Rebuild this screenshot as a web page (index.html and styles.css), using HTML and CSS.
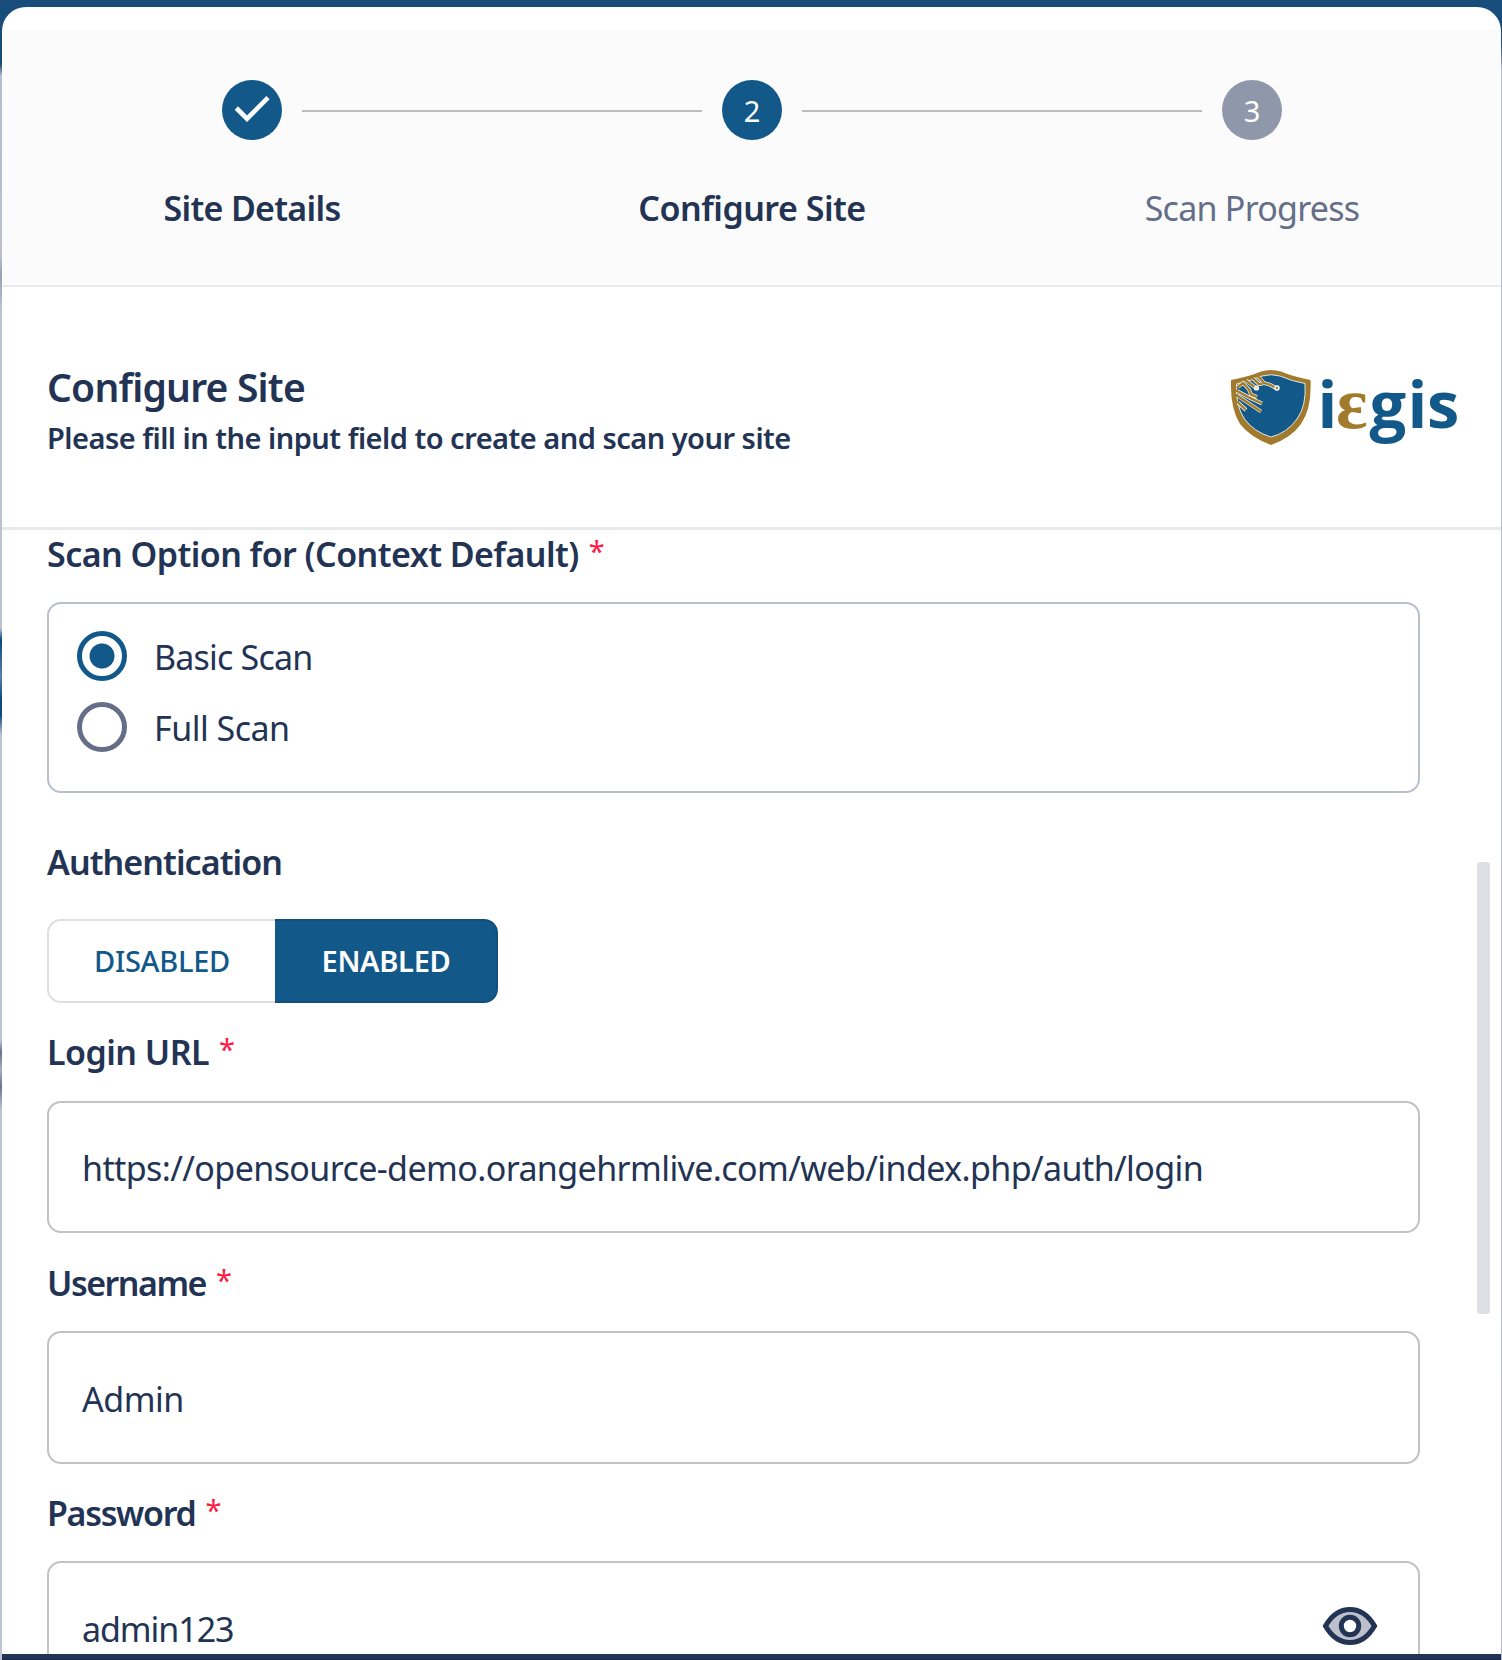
FILE: index.html
```html
<!DOCTYPE html>
<html lang="en">
<head>
<meta charset="utf-8">
<title>Configure Site</title>
<link rel="stylesheet" href="styles.css">
</head>
<body>
<main class="card">
  <header class="steps">
    <div class="step">
      <div class="track">
        <span class="line hidden"></span>
        <span class="dot"><svg class="check" viewBox="0 0 60 60"><path d="M14.300 28 25 38.700 46 17.700" fill="none" stroke="#fff" stroke-width="4.600"/></svg></span>
        <span class="line half"></span>
      </div>
      <div class="step-label"><span class="t-step1">Site Details</span></div>
    </div>
    <div class="step">
      <div class="track">
        <span class="line half"></span>
        <span class="dot">2</span>
        <span class="line half"></span>
      </div>
      <div class="step-label"><span class="t-step2">Configure Site</span></div>
    </div>
    <div class="step">
      <div class="track">
        <span class="line half"></span>
        <span class="dot pending">3</span>
        <span class="line hidden"></span>
      </div>
      <div class="step-label muted"><span class="t-step3">Scan Progress</span></div>
    </div>
  </header>

  <section class="intro">
    <div>
      <h1><span class="t-title">Configure Site</span></h1>
      <p><span class="t-sub">Please fill in the input field to create and scan your site</span></p>
    </div>
    <svg class="logo" viewBox="0 0 240 90" role="img" aria-label="iegis">
      <path d="M0 10Q17 7 30 1.500Q40 -1.500 50 1.500Q63 7 79.500 10Q81 38 70 54Q60 68 40 75Q19 67 9 54Q-1 38 0 10Z" fill="#a27a2c"/>
      <path d="M5.500 14Q20 11 31 6Q40 3.500 49 6Q60 11 74 13.500Q75.500 36 66 49Q56 63 40 67Q23 62 13.500 49Q4.500 36 5.500 14Z" fill="#12598a" stroke="#dfe7ec" stroke-width="1"/>
      <g fill="none" stroke="#f2eee4" stroke-width="3.800">
        <path d="M6 25.500 30 41.500M6 21 18 27.500 31 33.500M7 32.500 15 40M7 17 12 13 18 19.500 20 24.500 26 27M15 10.500 25 18M22 8.500 28 14H31.500M27.500 7 33 13 38.500 14.500 45 18"/>
      </g>
      <g fill="none" stroke="#a27a2c" stroke-width="2.300">
        <path d="M5 25 30 41.500M5 20.500 18 27.500 31 33.500M6 31.500 15 40M6 18 12 13 18 19.500 20 24.500 26 27M14 10 25 18M21 7.500 28 14H31.500M27 6 33 13 38.500 14.500 45 18"/>
      </g>
      <circle cx="25.500" cy="18" r="2" fill="#e9dcc0" stroke="#fff" stroke-width="1.200"/>
      <circle cx="46" cy="18" r="2" fill="#a27a2c" stroke="#fff" stroke-width="1.400"/>
      <text class="mark" x="86.500" y="57.500">i</text>
      <text class="mark-e" x="105" y="57.500">ε</text>
      <text class="mark" x="138.500 176.500 196" y="57.500">gis</text>
    </svg>
  </section>

  <div class="body">
    <form class="form">
      <div class="label low"><span class="t-scan">Scan Option for (Context Default)</span><i>*</i></div>
      <div class="radios">
        <div class="radio"><span class="ring on"></span><span class="t-basic">Basic Scan</span></div>
        <div class="radio"><span class="ring"></span><span class="t-full">Full Scan</span></div>
      </div>
      <div class="label auth"><span class="t-auth">Authentication</span></div>
      <div class="toggle">
        <div class="off"><span class="t-dis">DISABLED</span></div>
        <div class="active"><span class="t-en">ENABLED</span></div>
      </div>
      <div class="label"><span class="t-login">Login URL</span><i>*</i></div>
      <div class="input"><span class="t-url">https://opensource-demo.orangehrmlive.com/web/index.php/auth/login</span></div>
      <div class="label low"><span class="t-user">Username</span><i>*</i></div>
      <div class="input tall"><span class="t-admin">Admin</span></div>
      <div class="label low"><span class="t-pass">Password</span><i>*</i></div>
      <div class="input tall"><span class="t-123">admin123</span>
        <svg class="eye" viewBox="0 0 56 40"><path d="M3.500 20Q13 3.500 28 3.500T52.500 20Q43 36.500 28 36.500T3.500 20Z" fill="#bcc0cd" stroke="#223354" stroke-width="5"/><circle cx="28" cy="20" r="8.700" fill="#fff" stroke="#223354" stroke-width="5"/></svg>
      </div>
    </form>
    <div class="scroll"></div>
  </div>
</main>
<footer class="bottom"></footer>
</body>
</html>
```
FILE: styles.css
```css
* { box-sizing: border-box; }
html { height: 100%; overflow: hidden; }
body {
  margin: 0;
  height: 1660px;
  overflow: hidden;
  display: flex;
  flex-direction: column;
  padding: 7px 1px 0 2px;
  font-family: "Noto Sans", "Open Sans", sans-serif;
  font-size: 34px;
  color: #223354;
  background:
    linear-gradient(#184c7b 0, #184c7b 44px, #b9bbd0 70px, #b9bbcd 100%) right / 1px 100% no-repeat,
    linear-gradient(#184c7b 0, #184c7b 64px, #b9bbd0 76px, #bcbed0 255px, #9a9fb4 275px, #bfc2d2 310px, #bcc0d0 628px, #0a4a80 640px, #5c7fa6 676px, #0a4a80 700px, #0a4a80 715px, #bfc3d3 735px, #bfc3d3 1040px, #6a7390 1052px, #a9afc0 1070px, #6a7390 1086px, #bfc3d3 1110px, #bfc3d3 100%);
}
.card {
  flex: 1;
  min-height: 0;
  display: flex;
  flex-direction: column;
  background: #fff;
  border-radius: 24px 24px 0 0;
  padding-top: 23px;
  overflow: hidden;
}
.steps {
  flex: none;
  height: 257px;
  display: grid;
  grid-template-columns: repeat(3, 500px);
  padding-top: 50px;
  background: #fbfbfb;
  border-bottom: 2px solid #e9eaee;
}
.track { display: flex; align-items: center; gap: 20px; }
.line { flex: 1; height: 2px; margin-top: 2px; background: #bdbdbd; }
.line.hidden { visibility: hidden; }
.dot {
  width: 60px;
  height: 60px;
  border-radius: 50%;
  background: #12598a;
  color: #fff;
  font-size: 29px;
  line-height: 62px;
  text-align: center;
}
.dot.pending { background: #8f98aa; }
.check { display: block; width: 60px; height: 60px; }
.step-label { margin-top: 43px; line-height: 50px; text-align: center; font-weight: 560; }
.step-label.muted { font-weight: 400; color: #646e88; }
.intro {
  flex: none;
  height: 243px;
  display: flex;
  justify-content: space-between;
  padding: 74px 30px 0 45px;
  border-bottom: 3px solid #e8e9ec;
}
h1 { margin: 0; font-size: 39px; line-height: 52px; font-weight: 560; }
p { margin: 5px 0 0; font-size: 29px; line-height: 40px; font-weight: 560; }
.logo { width: 240px; height: 90px; margin-top: 9px; overflow: visible; }
.mark { font-family: "Open Sans", sans-serif; font-weight: 700; font-size: 65px; fill: #12598a; }
.mark-e { font-family: "Liberation Serif", serif; font-weight: 700; font-size: 74px; fill: #a27a2c; }
.body { flex: 1; min-height: 0; display: flex; justify-content: space-between; padding: 0 11px 0 45px; }
.form { width: 1373px; }
.label { display: flex; gap: 10px; height: 46px; line-height: 46px; margin: 26px 0; font-weight: 560; }
.label.low { line-height: 48px; }
.label:first-child { margin-top: 0; }
.label i { font-style: normal; font-weight: 400; font-size: 29px; margin-top: -3px; color: #ff1943; }
.label.auth { margin: 46px 0 34px; }
.radios {
  height: 191px;
  display: flex;
  flex-direction: column;
  gap: 21px;
  padding: 27px 28px;
  border: 2px solid #bbbfcc;
  border-radius: 14px;
}
.radio { display: flex; align-items: center; gap: 27px; height: 50px; line-height: 50px; }
.radio span:last-child { padding-top: 2px; }
.ring { width: 50px; height: 50px; border: 5px solid #646e88; border-radius: 50%; }
.ring.on { border-color: #12598a; background: radial-gradient(circle, #12598a 12px, transparent 13px); }
.toggle { display: flex; width: 451px; height: 84px; font-size: 29px; font-weight: 560; line-height: 80px; text-align: center; }
.off { width: 228px; border: 2px solid #dfdfe0; border-right: 0; border-radius: 14px 0 0 14px; color: #12598a; font-weight: 540; }
.active { width: 223px; padding-left: 1px; border: 2px solid #114f7d; border-left: 0; border-radius: 0 14px 14px 0; background: #12598a; color: #fff; }
.input {
  display: flex;
  align-items: center;
  justify-content: space-between;
  height: 132px;
  padding: 2px 40px 0 33px;
  border: 2px solid #c2c2c2;
  border-radius: 14px;
}
.input.tall { height: 133px; margin-bottom: -1px; padding-top: 3px; }
.eye { width: 56px; height: 40px; margin-top: -7px; }
.scroll { width: 13px; height: 452px; margin-top: 332px; border-radius: 3px; background: #dde0e6; }
.bottom { flex: none; height: 6px; background: #223354; border-bottom: 1px solid #1b2a4a; }

/* tracking per text run */
.t-step1 { letter-spacing: -.7px; }
.t-step2 { letter-spacing: -.5px; }
.t-step3 { letter-spacing: -.75px; }
.t-title { letter-spacing: -.78px; }
.t-sub { letter-spacing: -.51px; }
.t-scan { letter-spacing: -.55px; }
.t-basic { letter-spacing: -.8px; }
.t-full { letter-spacing: -.5px; }
.t-auth { letter-spacing: -.93px; }
.t-dis { letter-spacing: -.3px; }
.t-en { letter-spacing: -.3px; }
.t-login { letter-spacing: -.53px; }
.t-url { letter-spacing: -.6px; }
.t-user { letter-spacing: -1.5px; }
.t-admin { letter-spacing: -.5px; }
.t-pass { letter-spacing: -1.3px; }
.t-123 { letter-spacing: -1.06px; }
```
